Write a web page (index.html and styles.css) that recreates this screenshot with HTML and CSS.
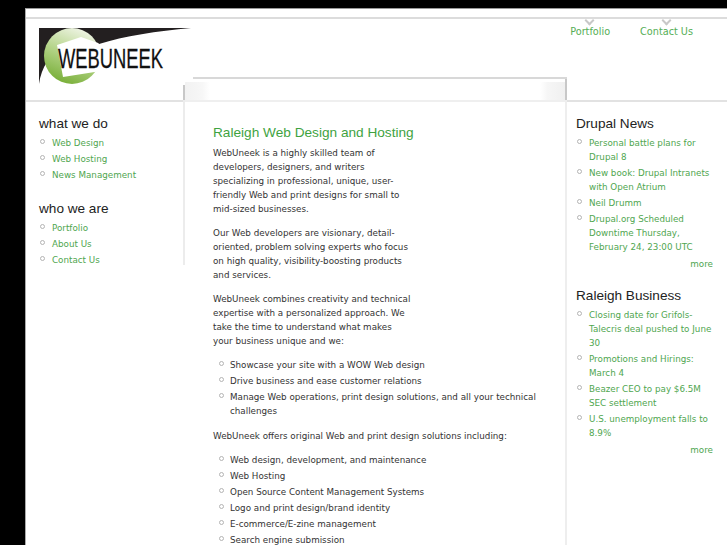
FILE: index.html
```html
<!DOCTYPE html>
<html lang="en">
<head>
  <meta charset="UTF-8">
  <title>WebUneek - Raleigh Web Design and Hosting</title>
  <link rel="stylesheet" href="styles.css">
</head>
<body>
  <div class="page">
    <div class="header">
      <svg class="logo" width="190" height="57" viewBox="0 0 190 57">
        <defs>
          <linearGradient id="ball" x1="0.7" y1="0" x2="0.3" y2="1">
            <stop offset="0" stop-color="#f1f5e8"/>
            <stop offset="0.5" stop-color="#b4d488"/>
            <stop offset="1" stop-color="#76ad35"/>
          </linearGradient>
        </defs>
        <path d="M0 0H60V30L8 34C4 40 1 48 0 56Z" fill="#231f20"/>
        <circle cx="33" cy="28" r="28" fill="url(#ball)"/>
        <path d="M18 17L42 9L62 16V43L24 49Z" fill="#fff"/>
        <path d="M50 0H152C118 3 85 8 60 16C57 10 54 5 50 0Z" fill="#231f20"/>
        <text class="logo-text" x="19" y="40" textLength="105" lengthAdjust="spacingAndGlyphs">WEBUNEEK</text>
      </svg>
      <div class="topnav">
        <a class="tab" href="#">Portfolio</a>
        <a class="tab" href="#">Contact Us</a>
      </div>
    </div>
    <div class="columns">
      <div class="left">
        <h3>what we do</h3>
        <ul class="links">
          <li><a href="#">Web Design</a></li>
          <li><a href="#">Web Hosting</a></li>
          <li><a href="#">News Management</a></li>
        </ul>
        <h3>who we are</h3>
        <ul class="links">
          <li><a href="#">Portfolio</a></li>
          <li><a href="#">About Us</a></li>
          <li><a href="#">Contact Us</a></li>
        </ul>
      </div>
      <div class="main">
        <h1>Raleigh Web Design and Hosting</h1>
        <p class="narrow">WebUneek is a highly skilled team of developers, designers, and writers specializing in professional, unique, user-friendly Web and print designs for small to mid-sized businesses.</p>
        <p class="narrow">Our Web developers are visionary, detail-oriented, problem solving experts who focus on high quality, visibility-boosting products and services.</p>
        <p class="narrow">WebUneek combines creativity and technical expertise with a personalized approach. We take the time to understand what makes your business unique and we:</p>
        <ul class="bullets">
          <li>Showcase your site with a WOW Web design</li>
          <li>Drive business and ease customer relations</li>
          <li>Manage Web operations, print design solutions, and all your technical challenges</li>
        </ul>
        <p>WebUneek offers original Web and print design solutions including:</p>
        <ul class="bullets">
          <li>Web design, development, and maintenance</li>
          <li>Web Hosting</li>
          <li>Open Source Content Management Systems</li>
          <li>Logo and print design/brand identity</li>
          <li>E-commerce/E-zine management</li>
          <li>Search engine submission</li>
        </ul>
      </div>
      <div class="right">
        <h3>Drupal News</h3>
        <ul class="links">
          <li><a href="#">Personal battle plans for Drupal 8</a></li>
          <li><a href="#">New book: Drupal Intranets with Open Atrium</a></li>
          <li><a href="#">Neil Drumm</a></li>
          <li><a href="#">Drupal.org Scheduled Downtime Thursday, February 24, 23:00 UTC</a></li>
        </ul>
        <div class="more"><a href="#">more</a></div>
        <h3>Raleigh Business</h3>
        <ul class="links">
          <li><a href="#">Closing date for Grifols-Talecris deal pushed to June 30</a></li>
          <li><a href="#">Promotions and Hirings: March 4</a></li>
          <li><a href="#">Beazer CEO to pay $6.5M SEC settlement</a></li>
          <li><a href="#">U.S. unemployment falls to 8.9%</a></li>
        </ul>
        <div class="more"><a href="#">more</a></div>
      </div>
    </div>
  </div>
</body>
</html>
```

FILE: styles.css
```css
html, body {
  margin: 0;
  height: 545px;
  overflow: hidden;
}

body {
  background: #000;
  font-family: "DejaVu Sans", Verdana, sans-serif;
  font-size: 8.75px;
  line-height: 14px;
  color: #333;
}

a {
  color: #4fa64f;
  text-decoration: none;
}

.page {
  margin: 8px 0 0 25px;
  height: 537px;
  background: #fff;
  border-top: 1px solid #999;
  border-left: 1px solid #aaa;
  overflow: hidden;
}

.header {
  display: flex;
  justify-content: space-between;
  align-items: flex-start;
  height: 91px;
  border-bottom: 2px solid #e2e2e2;
  background: linear-gradient(#fff 8px, #dcdcdc 8px, #dcdcdc 10px, #fff 10px);
}

.logo {
  margin: 19px 0 0 13px;
}

.logo-text {
  font-family: "Liberation Sans", Arial, sans-serif;
  font-size: 28px;
  fill: #111;
  stroke: #111;
  stroke-width: 0.3;
}

.topnav {
  display: flex;
  gap: 30px;
  margin: 16px 34px 0 0;
  font-size: 9.7px;
}

.tab {
  position: relative;
  color: #55ae55;
}

.tab::before {
  content: "";
  position: absolute;
  top: -8px;
  left: 50%;
  width: 5px;
  height: 5px;
  margin-left: -4px;
  border-right: 2px solid #c8c8c8;
  border-bottom: 2px solid #c8c8c8;
  transform: rotate(45deg);
}

.columns {
  display: flex;
  align-items: flex-start;
}

.left {
  width: 144px;
  padding: 13px 0 0 13px;
}

h3 {
  margin: 0 0 3px;
  font-family: "Liberation Sans", Arial, sans-serif;
  font-size: 13.6px;
  font-weight: normal;
  line-height: 17px;
  color: #222;
}

.links {
  list-style: none;
  margin: 0 0 17px;
  padding: 0;
}

.links li {
  position: relative;
  padding: 1px 0 1px 13px;
}

.links li::before {
  content: "";
  position: absolute;
  left: 1px;
  top: 4px;
  width: 3px;
  height: 3px;
  border: 1px solid #b4b4b4;
  border-radius: 50%;
}

.main {
  flex: none;
  width: 354px;
  height: 470px;
  margin-top: -25px;
  padding: 47px 0 0 30px;
  background-color: #fff;
  background-repeat: no-repeat;
  background-image:
    linear-gradient(#d8d8d8, #d8d8d8),
    linear-gradient(#c8c8c8, #c8c8c8),
    linear-gradient(#c8c8c8, #c8c8c8),
    linear-gradient(#ececec, #ececec),
    linear-gradient(#eeeeee, #eeeeee),
    linear-gradient(#efefef, #efefef),
    linear-gradient(to right, #f2f2f2, #f7f7f7 70%, #fff),
    linear-gradient(to left, #f0f0f0, #f6f6f6 70%, #fff);
  background-size:
    374px 2px,
    2px 15px,
    2px 23px,
    2px 165px,
    2px 100%,
    100% 2px,
    25px 18px,
    25px 18px;
  background-position:
    10px 0,
    0 8px,
    382px 0,
    0 23px,
    382px 23px,
    0 23px,
    2px 5px,
    357px 5px;
}

h1 {
  margin: 0 0 4px;
  font-family: "Liberation Sans", Arial, sans-serif;
  font-size: 13.65px;
  font-weight: normal;
  line-height: 18px;
  color: #3fa33f;
}

.main p {
  margin: 0 0 10px;
}

.narrow {
  width: 198px;
}

.bullets {
  list-style: none;
  margin: 0 0 9px;
  padding: 0 0 0 17px;
}

.bullets li {
  position: relative;
  padding-bottom: 2px;
}

.bullets li::before {
  content: "";
  position: absolute;
  left: -11px;
  top: 3px;
  width: 3px;
  height: 3px;
  border: 1px solid #b4b4b4;
  border-radius: 50%;
}

.right {
  width: 137px;
  padding: 13px 0 0 9px;
}

.right .links {
  margin-bottom: 2px;
}

.more {
  text-align: right;
  margin-bottom: 16px;
}
```
